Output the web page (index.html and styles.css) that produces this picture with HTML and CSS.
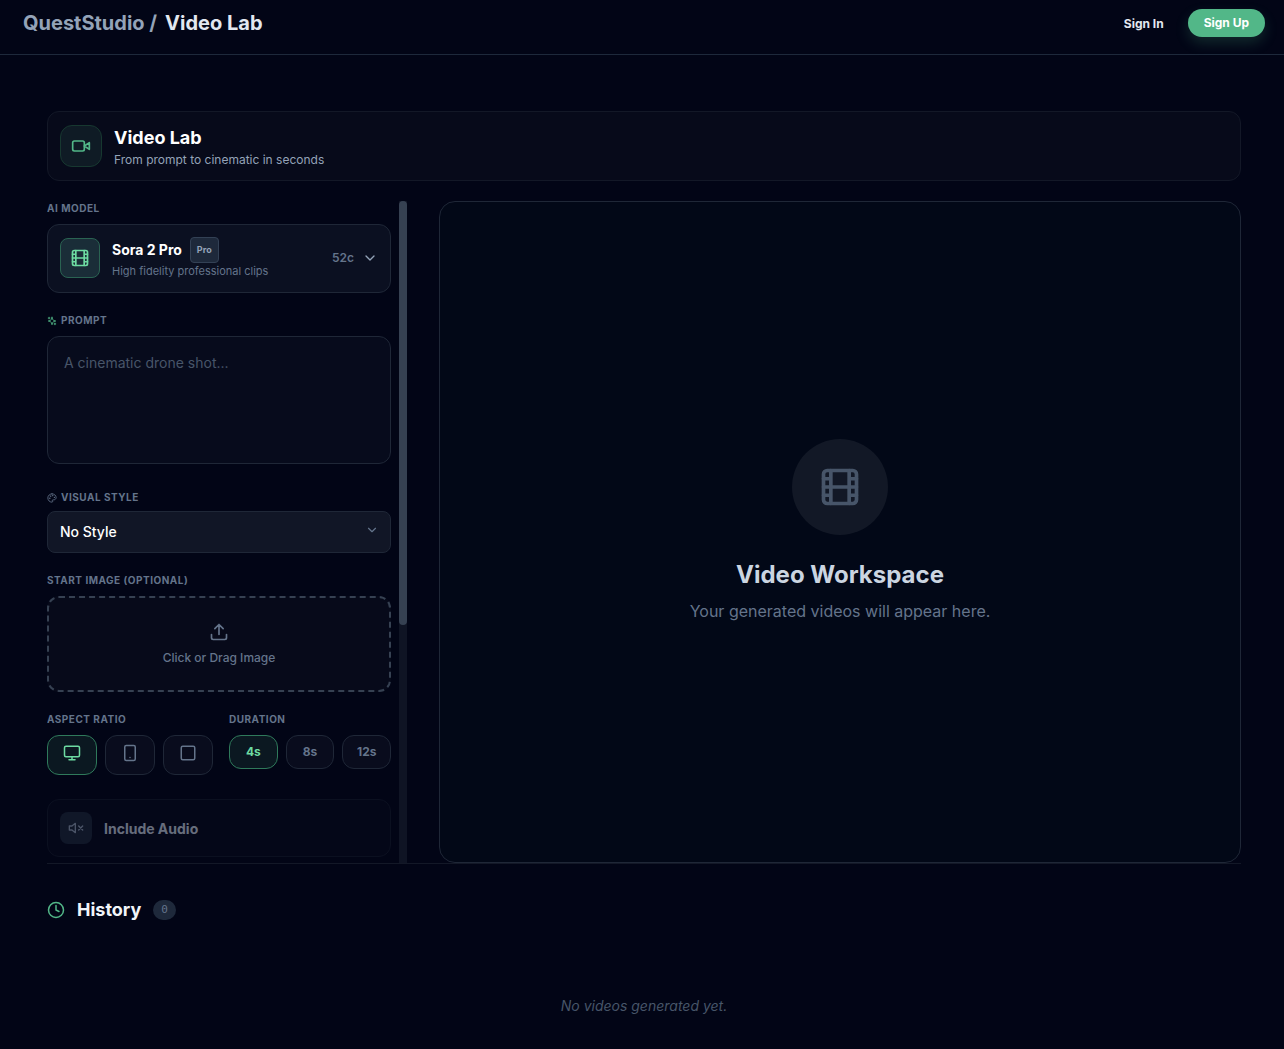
FILE: index.html
```html
<!DOCTYPE html>
<html lang="en">
<head>
<meta charset="utf-8">
<meta name="viewport" content="width=device-width, initial-scale=1">
<title>QuestStudio / Video Lab</title>
<link rel="stylesheet" href="styles.css">
</head>
<body>
<svg class="sprite" aria-hidden="true">
  <symbol id="film" viewBox="0 0 24 24"><rect x="3" y="3" width="18" height="18" rx="2"/><path d="M7 3v18M3 7.5h4M3 12h18M3 16.5h4M17 3v18M17 7.5h4M17 16.5h4"/></symbol>
  <symbol id="chevron" viewBox="0 0 24 24"><path d="m6 9 6 6 6-6"/></symbol>
</svg>

<header class="topbar">
  <a class="brand" href="#"><span>QuestStudio /</span><span class="brand-page">Video Lab</span></a>
  <nav class="account">
    <a class="sign-in" href="#">Sign In</a>
    <button class="sign-up" type="button">Sign Up</button>
  </nav>
</header>

<main class="page">
  <section class="hero">
    <span class="hero-icon">
      <svg class="icon icon-20" viewBox="0 0 24 24"><path d="m22 8-6 4 6 4V8Z"/><rect x="2" y="6" width="14" height="12" rx="2"/></svg>
    </span>
    <div>
      <h1 class="hero-title">Video Lab</h1>
      <p class="hero-text">From prompt to cinematic in seconds</p>
    </div>
  </section>

  <div class="studio">
    <div class="sidebar">
      <form class="controls">
        <div class="field">
          <span class="label" id="model-label">AI Model</span>
          <button class="model" type="button" aria-describedby="model-label">
            <span class="model-icon"><svg class="icon icon-20"><use href="#film"/></svg></span>
            <span class="model-info">
              <span class="model-head"><span class="model-name">Sora 2 Pro</span><span class="tag">Pro</span></span>
              <span class="model-note">High fidelity professional clips</span>
            </span>
            <span class="model-cost">52c</span>
            <svg class="icon icon-16 model-chevron"><use href="#chevron"/></svg>
          </button>
        </div>

        <div class="field field-prompt">
          <label class="label" for="prompt">
            <svg class="icon icon-10 green" viewBox="0 0 24 24"><path d="m12 3-1.912 5.813a2 2 0 0 1-1.275 1.275L3 12l5.813 1.912a2 2 0 0 1 1.275 1.275L12 21l1.912-5.813a2 2 0 0 1 1.275-1.275L21 12l-5.813-1.912a2 2 0 0 1-1.275-1.275L12 3ZM5 3v4M19 17v4M3 5h4M17 19h4"/></svg>
            Prompt
          </label>
          <textarea class="prompt" id="prompt" placeholder="A cinematic drone shot..."></textarea>
        </div>

        <div class="field">
          <label class="label label-select" for="style">
            <svg class="icon icon-10" viewBox="0 0 24 24"><circle cx="13.5" cy="6.5" r=".5"/><circle cx="17.5" cy="10.5" r=".5"/><circle cx="8.5" cy="7.5" r=".5"/><circle cx="6.5" cy="12.5" r=".5"/><path d="M12 2C6.5 2 2 6.5 2 12s4.5 10 10 10c.926 0 1.648-.746 1.648-1.688 0-.437-.18-.835-.437-1.125-.29-.289-.438-.652-.438-1.125a1.64 1.64 0 0 1 1.668-1.668h1.996c3.051 0 5.555-2.503 5.555-5.554C21.965 6.012 17.461 2 12 2z"/></svg>
            Visual Style
          </label>
          <div class="select-wrap">
            <select class="select" id="style"><option>No Style</option></select>
            <svg class="icon icon-14 select-chevron"><use href="#chevron"/></svg>
          </div>
        </div>

        <div class="field">
          <span class="label" id="image-label">Start Image (Optional)</span>
          <button class="dropzone" type="button" aria-describedby="image-label">
            <svg class="icon icon-20" viewBox="0 0 24 24"><path d="M21 15v4a2 2 0 0 1-2 2H5a2 2 0 0 1-2-2v-4M17 8l-5-5-5 5M12 3v12"/></svg>
            Click or Drag Image
          </button>
        </div>

        <div class="options">
          <div role="group" aria-labelledby="ratio-label">
            <span class="label" id="ratio-label">Aspect Ratio</span>
            <div class="choices">
              <button class="choice ratio active" type="button" aria-label="Landscape"><svg class="icon icon-18" viewBox="0 0 24 24"><rect x="2" y="3" width="20" height="14" rx="2"/><path d="M8 21h8M12 17v4"/></svg></button>
              <button class="choice ratio" type="button" aria-label="Portrait"><svg class="icon icon-18" viewBox="0 0 24 24"><rect x="5" y="2" width="14" height="20" rx="2"/><path d="M12 18h.01"/></svg></button>
              <button class="choice ratio" type="button" aria-label="Square"><svg class="icon icon-18" viewBox="0 0 24 24"><rect x="3" y="3" width="18" height="18" rx="2"/></svg></button>
            </div>
          </div>
          <div class="durations" role="group" aria-labelledby="duration-label">
            <span class="label" id="duration-label">Duration</span>
            <div class="choices">
              <button class="choice duration active" type="button">4s</button>
              <button class="choice duration" type="button">8s</button>
              <button class="choice duration" type="button">12s</button>
            </div>
          </div>
        </div>

        <button class="audio" type="button" disabled>
          <span class="audio-icon"><svg class="icon icon-16" viewBox="0 0 24 24"><path d="M11 5 6 9H2v6h4l5 4V5ZM22 9l-6 6M16 9l6 6"/></svg></span>
          Include Audio
        </button>
      </form>
      <div class="scrollbar" aria-hidden="true"><div class="scrollbar-thumb"></div></div>
    </div>

    <section class="workspace">
      <span class="workspace-icon"><svg class="icon icon-44"><use href="#film"/></svg></span>
      <h2 class="workspace-title">Video Workspace</h2>
      <p class="workspace-text">Your generated videos will appear here.</p>
    </section>
  </div>

  <section class="history">
    <div class="history-head">
      <svg class="icon icon-18 green" viewBox="0 0 24 24"><circle cx="12" cy="12" r="10"/><path d="M12 6v6l4 2"/></svg>
      <h2 class="history-title">History</h2>
      <span class="count">0</span>
    </div>
    <p class="history-empty">No videos generated yet.</p>
  </section>
</main>
</body>
</html>
```

FILE: styles.css
```css
* {
  box-sizing: border-box;
}

body,
h1,
h2,
p {
  margin: 0;
}

body {
  min-height: 100vh;
  background: #020516;
  color: #e2e8f0;
  font-family: Inter, "Liberation Sans", sans-serif;
  font-size: 14px;
}

button,
select,
textarea {
  margin: 0;
  font: inherit;
  color: inherit;
}

a {
  color: inherit;
  text-decoration: none;
}

.sprite {
  display: none;
}

.icon {
  display: block;
  flex: none;
  fill: none;
  stroke: currentColor;
  stroke-width: 2;
  stroke-linecap: round;
  stroke-linejoin: round;
}

.icon-10 { width: 10px; height: 10px; }
.icon-14 { width: 14px; height: 14px; }
.icon-16 { width: 16px; height: 16px; }
.icon-18 { width: 18px; height: 18px; }
.icon-20 { width: 20px; height: 20px; }
.icon-44 { width: 44px; height: 44px; }

.green {
  color: #52b788;
}

.topbar {
  display: flex;
  align-items: flex-start;
  justify-content: space-between;
  height: 55px;
  padding: 9px 19px 0 23px;
  border-bottom: 1px solid #1e293b;
}

.brand {
  display: flex;
  gap: 8px;
  font-size: 20px;
  font-weight: 700;
  line-height: 28px;
  color: #94a3b8;
}

.brand-page {
  color: #e2e8f0;
}

.account {
  display: flex;
  align-items: center;
  gap: 24px;
  font-size: 12px;
  font-weight: 700;
}

.sign-up {
  height: 28px;
  padding: 0 16px 1px;
  border: 0;
  border-radius: 14px;
  background: #52b788;
  color: #fff;
  box-shadow: 0 6px 14px rgba(82, 183, 136, 0.2);
}

.page {
  padding: 56px 43px 32px 47px;
}

.hero {
  display: flex;
  align-items: center;
  gap: 12px;
  height: 70px;
  margin-bottom: 20px;
  padding: 0 12px;
  border: 1px solid #131827;
  border-radius: 12px;
  background: #070a1a;
}

.hero-icon {
  display: grid;
  place-items: center;
  width: 42px;
  height: 42px;
  border: 1px solid #173830;
  border-radius: 12px;
  background: #0f1b25;
  color: #52b788;
}

.hero-title {
  font-size: 18px;
  line-height: 28px;
  font-weight: 700;
  color: #fff;
}

.hero-text {
  font-size: 12px;
  line-height: 16px;
  color: #94a3b8;
}

.studio {
  display: grid;
  grid-template-columns: 360px 1fr;
  gap: 32px;
  height: 662px;
}

.sidebar {
  display: flex;
  gap: 8px;
  min-height: 0;
}

.controls {
  flex: 1;
  overflow-y: auto;
  padding-bottom: 176px;
  scrollbar-width: none;
}

.scrollbar {
  width: 8px;
  background: #0f1424;
}

.scrollbar-thumb {
  height: 64%;
  border-radius: 4px;
  background: #364152;
}

.field {
  margin-bottom: 20px;
}

.field-prompt {
  margin-bottom: 26px;
}

.label {
  display: flex;
  align-items: center;
  gap: 4px;
  margin-bottom: 8px;
  font-size: 10px;
  font-weight: 700;
  line-height: 15px;
  letter-spacing: 0.05em;
  text-transform: uppercase;
  color: #64748b;
}

.label-select {
  margin-bottom: 6px;
}

.model {
  display: flex;
  align-items: center;
  width: 100%;
  height: 69px;
  padding: 0 12px 2px;
  border: 1px solid #1f2737;
  border-radius: 12px;
  background: #0b1021;
  text-align: left;
}

.model-icon {
  display: grid;
  place-items: center;
  width: 40px;
  height: 40px;
  margin-right: 12px;
  border: 1px solid #2a6352;
  border-radius: 8px;
  background: #1a2d38;
  color: #6ddba2;
}

.model-info {
  flex: 1;
}

.model-head {
  display: flex;
  align-items: center;
  gap: 8px;
}

.model-name {
  font-weight: 700;
  color: #fff;
}

.tag {
  padding: 0 6px;
  border: 1px solid #334155;
  border-radius: 4px;
  background: #1e293b;
  font-size: 9px;
  font-weight: 700;
  line-height: 24px;
  color: #94a3b8;
}

.model-note {
  display: block;
  font-size: 11px;
  line-height: 16px;
  color: #64748b;
}

.model-cost {
  margin-right: 8px;
  font-size: 12px;
  font-weight: 600;
  color: #64748b;
}

.model-chevron {
  color: #94a3b8;
}

.prompt {
  display: block;
  width: 100%;
  height: 128px;
  padding: 16px;
  border: 1px solid #1f2737;
  border-radius: 12px;
  background: #070b1c;
  line-height: 20px;
  resize: none;
}

.prompt::placeholder {
  color: #475569;
}

.select-wrap {
  position: relative;
}

.select {
  display: block;
  width: 100%;
  height: 42px;
  padding: 0 12px 2px;
  border: 1px solid #1f2737;
  border-radius: 8px;
  background: #111626;
  font-weight: 500;
  color: #fff;
  appearance: none;
}

.select-chevron {
  position: absolute;
  top: 12px;
  right: 12px;
  color: #64748b;
}

.dropzone {
  display: flex;
  flex-direction: column;
  align-items: center;
  justify-content: center;
  gap: 8px;
  width: 100%;
  height: 96px;
  padding: 0 0 2px;
  border: 2px dashed #364152;
  border-radius: 12px;
  background: #070a1a;
  font-size: 12px;
  font-weight: 500;
  color: #64748b;
}

.options {
  display: flex;
  gap: 16px;
  margin-bottom: 24px;
}

.durations {
  flex: 1;
}

.choices {
  display: flex;
  gap: 8px;
}

.choice {
  display: flex;
  justify-content: center;
  padding: 0;
  border: 1px solid #1f2737;
  border-radius: 12px;
  background: #090c1d;
  color: #64748b;
}

.ratio {
  width: 50px;
  height: 40px;
  padding-top: 8px;
}

.duration {
  flex: 1;
  height: 34px;
  padding-bottom: 2px;
  align-items: center;
  font-size: 12px;
  font-weight: 700;
}

.active {
  border-color: #2f7a5b;
  background: #0b1821;
  color: #6ddba2;
}

.audio {
  display: flex;
  align-items: center;
  gap: 12px;
  width: 100%;
  height: 58px;
  padding: 0 12px;
  border: 1px solid #151b2b;
  border-radius: 12px;
  background: #070a1a;
  font-weight: 700;
  color: #cbd5e1;
  opacity: 0.5;
}

.audio-icon {
  display: grid;
  place-items: center;
  width: 32px;
  height: 32px;
  border-radius: 8px;
  background: #1e293b;
  color: #94a3b8;
}

.workspace {
  display: flex;
  flex-direction: column;
  align-items: center;
  justify-content: center;
  padding-bottom: 2px;
  border: 1px solid #1f2737;
  border-radius: 16px;
  background: #020817;
}

.workspace-icon {
  display: grid;
  place-items: center;
  width: 96px;
  height: 96px;
  margin-bottom: 24px;
  border-radius: 50%;
  background: #121826;
  color: #475569;
}

.workspace-title {
  margin-bottom: 8px;
  font-size: 24px;
  font-weight: 700;
  line-height: 32px;
  color: #cbd5e1;
}

.workspace-text {
  font-size: 16px;
  line-height: 24px;
  color: #64748b;
}

.history {
  padding-top: 32px;
  border-top: 1px solid #131827;
}

.history-head {
  display: flex;
  align-items: center;
  gap: 12px;
  height: 28px;
}

.history-title {
  font-size: 18px;
  font-weight: 700;
  line-height: 28px;
  color: #f1f5f9;
}

.count {
  padding: 0 8px;
  border-radius: 10px;
  background: #1e293b;
  font-family: "DejaVu Sans Mono", monospace;
  font-size: 11px;
  line-height: 20px;
  color: #64748b;
}

.history-empty {
  padding-top: 72px;
  font-size: 14px;
  line-height: 20px;
  font-style: italic;
  text-align: center;
  color: #475569;
}
```
